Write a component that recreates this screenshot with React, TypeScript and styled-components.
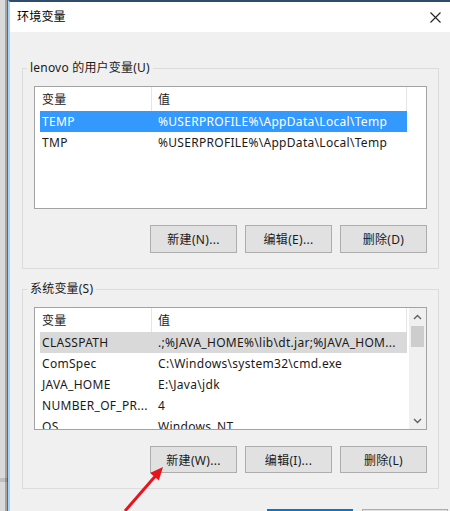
import React from 'react';
import styled, { createGlobalStyle } from 'styled-components';

const GlobalStyle = createGlobalStyle`
  html, body { margin: 0; padding: 0; }
  body {
    width: 450px;
    height: 511px;
    overflow: hidden;
    background: #d4d4d4;
    font-family: "Noto Sans", "Noto Sans CJK SC", sans-serif;
    font-size: 12px;
    color: #000;
  }
  * { box-sizing: border-box; }
`;

const Screen = styled.div`
  position: relative;
  display: flex;
  width: 450px;
  height: 511px;
  overflow: hidden;
`;

const LeftStrip = styled.div`
  flex: none;
  width: 8px;
  height: 100%;
  background:
    linear-gradient(to bottom, transparent 0 478px, rgba(0,0,0,0.12) 478px 482px, transparent 482px),
    linear-gradient(to right, #dadada 0 5px, #a4a4a4 5px 7px, #5e6772 7px 8px);
`;

const Window = styled.div`
  flex: 1;
  display: flex;
  flex-direction: column;
  border-top: 2px solid #2f4d6b;
  border-left: 2px solid #a8d2f3;
  background: #f0f0f0;
  min-width: 0;
`;

const TitleBar = styled.div`
  flex: none;
  height: 30px;
  display: flex;
  align-items: center;
  justify-content: space-between;
  padding: 0 9px 0 7px;
  background: #fff;
`;

const Title = styled.span`
  font-size: 12px;
  line-height: 16px;
  letter-spacing: 0.2px;
`;

const Body = styled.div`
  display: flex;
  flex-direction: column;
  gap: 12px;
  padding: 28px 11px 0 12px;
`;

const Group = styled.fieldset`
  margin: 0;
  padding: 0;
  min-width: 0;
  border: 1px solid #dcdcdc;
`;

const Legend = styled.legend`
  margin-left: 4px;
  padding: 0 3px;
  font-size: 12px;
  line-height: 16px;
  letter-spacing: 0.2px;
  color: #1a1a1a;
`;

const GroupContent = styled.div<{ $bottom: number }>`
  display: flex;
  flex-direction: column;
  gap: 16px;
  padding: 10px 11px ${p => p.$bottom}px 11px;
`;

const ListBox = styled.div`
  height: 123px;
  display: flex;
  border: 1px solid #a3a3a3;
  background: #fff;
  overflow: hidden;
`;

const Table = styled.div`
  flex: 1;
  padding-left: 5px;
  display: grid;
  grid-template-columns: 112px 255px;
  grid-template-rows: 24px;
  grid-auto-rows: 21px;
  align-content: start;
  letter-spacing: 0.3px;
`;

const HeadCell = styled.div<{ $pad: number }>`
  display: flex;
  align-items: center;
  padding-left: ${p => p.$pad}px;
  border-right: 1px solid #e5e5e5;
  color: #1a1a1a;
`;

const Cell = styled.div<{ $pad: number; $state?: 'active' | 'inactive' }>`
  display: flex;
  align-items: center;
  padding-left: ${p => p.$pad}px;
  white-space: nowrap;
  overflow: hidden;
  background: ${p => (p.$state === 'active' ? '#3399ff' : p.$state === 'inactive' ? '#d9d9d9' : 'transparent')};
  color: ${p => (p.$state === 'active' ? '#fff' : '#1a1a1a')};
`;

const ScrollBar = styled.div<{ $blank?: boolean }>`
  flex: none;
  width: 17px;
  display: flex;
  flex-direction: column;
  background: ${p => (p.$blank ? '#fff' : '#f0f0f0')};
`;

const ScrollArrow = styled.div`
  flex: none;
  height: 17px;
  display: flex;
  align-items: center;
  justify-content: center;
`;

const ScrollTrack = styled.div`
  flex: 1;
  padding: 1px 2px 0;
`;

const Thumb = styled.div`
  height: 21px;
  background: #cdcdcd;
`;

const ButtonRow = styled.div`
  display: flex;
  justify-content: flex-end;
  gap: 8px;
`;

const Button = styled.button<{ $h: number }>`
  width: 87px;
  height: ${p => p.$h}px;
  padding: 0;
  border: 1px solid #adadad;
  background: #e1e1e1;
  font-family: "Noto Sans", "Noto Sans CJK SC", sans-serif;
  font-size: 12px;
  letter-spacing: 0.3px;
  color: #1a1a1a;
`;

const Footer = styled.div`
  display: flex;
  justify-content: flex-end;
  gap: 9px;
  margin-top: 20px;
  padding-right: 2px;
`;

const FooterButton = styled.div<{ $primary?: boolean }>`
  width: 86px;
  height: 24px;
  border: ${p => (p.$primary ? '2px solid #0078d7' : '1px solid #adadad')};
  background: #e1e1e1;
`;

const ArrowOverlay = styled.svg`
  position: absolute;
  left: 120px;
  top: 460px;
  width: 50px;
  height: 51px;
  overflow: visible;
`;

type Row = { name: string; value: string; state?: 'active' | 'inactive' };

const userVars: Row[] = [
  { name: 'TEMP', value: '%USERPROFILE%\\AppData\\Local\\Temp', state: 'active' },
  { name: 'TMP', value: '%USERPROFILE%\\AppData\\Local\\Temp' },
];

const sysVars: Row[] = [
  { name: 'CLASSPATH', value: '.;%JAVA_HOME%\\lib\\dt.jar;%JAVA_HOM...', state: 'inactive' },
  { name: 'ComSpec', value: 'C:\\Windows\\system32\\cmd.exe' },
  { name: 'JAVA_HOME', value: 'E:\\Java\\jdk' },
  { name: 'NUMBER_OF_PR...', value: '4' },
  { name: 'OS', value: 'Windows_NT' },
];

const Chevron = ({ up }: { up?: boolean }) => (
  <svg width="9" height="6" viewBox="0 0 9 6">
    <path
      d={up ? 'M1 5 L4.5 1.5 L8 5' : 'M1 1 L4.5 4.5 L8 1'}
      fill="none"
      stroke="#606060"
      strokeWidth="1.4"
    />
  </svg>
);

const VarList = ({ rows, scroll }: { rows: Row[]; scroll?: boolean }) => (
  <ListBox>
    <Table>
      <HeadCell $pad={2}>变量</HeadCell>
      <HeadCell $pad={6}>值</HeadCell>
      {rows.map(r => (
        <React.Fragment key={r.name}>
          <Cell $pad={2} $state={r.state}>{r.name}</Cell>
          <Cell $pad={6} $state={r.state}>{r.value}</Cell>
        </React.Fragment>
      ))}
    </Table>
    {scroll ? (
      <ScrollBar>
        <ScrollArrow><Chevron up /></ScrollArrow>
        <ScrollTrack><Thumb /></ScrollTrack>
        <ScrollArrow><Chevron /></ScrollArrow>
      </ScrollBar>
    ) : (
      <ScrollBar $blank />
    )}
  </ListBox>
);

export default function App() {
  return (
    <>
      <GlobalStyle />
      <Screen>
        <LeftStrip />
        <Window>
          <TitleBar>
            <Title>环境变量</Title>
            <svg width="11" height="11" viewBox="0 0 11 11">
              <path d="M0.5 0.5 L10.5 10.5 M10.5 0.5 L0.5 10.5" stroke="#222" strokeWidth="1.1" />
            </svg>
          </TitleBar>
          <Body>
            <Group>
              <Legend>lenovo 的用户变量(U)</Legend>
              <GroupContent $bottom={15}>
                <VarList rows={userVars} />
                <ButtonRow>
                  <Button $h={28}>新建(N)...</Button>
                  <Button $h={28}>编辑(E)...</Button>
                  <Button $h={28}>删除(D)</Button>
                </ButtonRow>
              </GroupContent>
            </Group>
            <Group>
              <Legend>系统变量(S)</Legend>
              <GroupContent $bottom={15}>
                <VarList rows={sysVars} scroll />
                <ButtonRow>
                  <Button $h={27}>新建(W)...</Button>
                  <Button $h={27}>编辑(I)...</Button>
                  <Button $h={27}>删除(L)</Button>
                </ButtonRow>
              </GroupContent>
            </Group>
          </Body>
          <Footer>
            <FooterButton $primary />
            <FooterButton />
          </Footer>
        </Window>
        <ArrowOverlay viewBox="0 0 50 51">
          <line x1="5" y1="51" x2="35" y2="16.5" stroke="#e8141c" strokeWidth="3" />
          <polygon points="43,7 38.9,20.6 30.1,13.1" fill="#e8141c" />
        </ArrowOverlay>
      </Screen>
    </>
  );
}
